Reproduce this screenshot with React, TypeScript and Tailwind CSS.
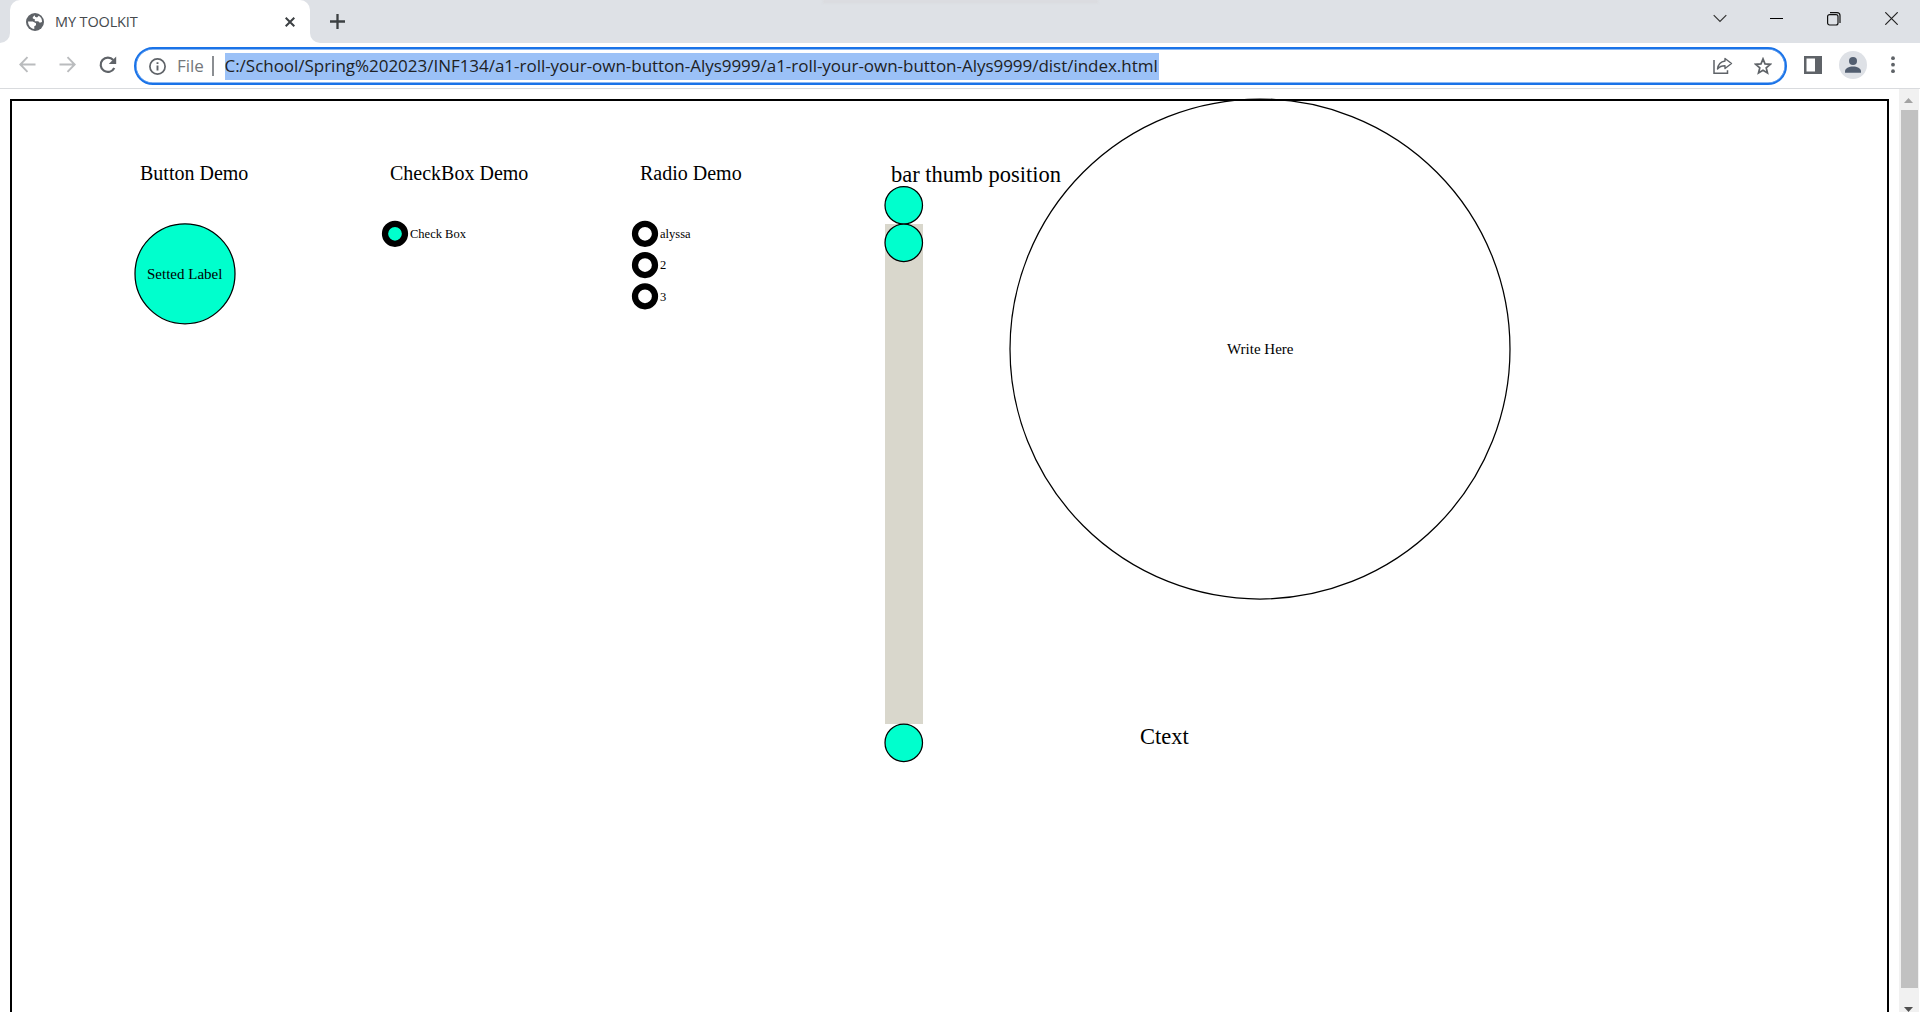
import type { ReactNode } from "react";

const serif = "font-['Liberation_Serif',serif]";

type DiscProps = { at: string; box: number; cx: number; cy: number; r: number; fill: string; stroke?: number };

function Disc({ at, box, cx, cy, r, fill, stroke = 1.25 }: DiscProps) {
  return (
    <svg className={`absolute ${at}`} width={box} height={box}>
      <circle cx={cx} cy={cy} r={r} fill={fill} stroke="#000" strokeWidth={stroke} />
    </svg>
  );
}

function Label({ className, children }: { className: string; children: ReactNode }) {
  return <span className={`absolute whitespace-pre leading-none ${className}`}>{children}</span>;
}

const MINT = "#00ffcd";

function TabStrip() {
  return (
    <div className="relative flex h-[43px] bg-[#dee1e6]">
      <div className="absolute top-0 left-[823px] h-[3px] w-[275px] bg-[#d9dade] blur-[1px]" />
      <div className="flex w-[10px] items-end bg-white">
        <div className="h-full w-full rounded-br-[10px] bg-[#dee1e6]" />
      </div>
      <div className="bg-[#dee1e6]">
        <div className="flex h-full w-[300px] items-center rounded-t-[10px] bg-white pr-[15px] pl-[16px]">
          <svg width="18" height="18" viewBox="0 0 18 18">
            <circle cx="9" cy="9" r="9" fill="#5f6368" />
            <path d="M9 2.200 6.800 4v1.500l2 .8v1.900h3.400l1.600 1.500 2.200-.7c.2-2.800-1-5-3.200-6.300L11 4.600 9 3.800z" fill="#fff" />
            <path d="M2 8.500h4.800l3.200 1.700v2.100l-1.700.9v2.700C4.800 15.500 2.200 12.800 2 8.500z" fill="#fff" />
          </svg>
          <span className="ml-[11px] flex-1 font-['Open_Sans',sans-serif] text-[14.500px] tracking-[-0.130px] text-[#45494d]">MY TOOLKIT</span>
          <svg width="10" height="10" viewBox="0 0 10 10" className="mt-px">
            <path d="M.7.7 9.300 9.300M9.300.7.7 9.300" stroke="#3c4043" strokeWidth="2" />
          </svg>
        </div>
      </div>
      <div className="w-[10px] bg-white">
        <div className="h-full w-full rounded-bl-[10px] bg-[#dee1e6]" />
      </div>
      <svg className="mt-[14px] ml-[10px]" width="15" height="15" viewBox="0 0 15 15">
        <path d="M7.500 0v15M0 7.500h15" stroke="#3c4043" strokeWidth="2.300" />
      </svg>
      <div className="ml-auto flex h-[37px] items-center pr-[22px]">
        <svg width="14" height="9" viewBox="0 0 14 9" className="mr-[43px]">
          <path d="M.7 1.200 7 7.500l6.300-6.300" fill="none" stroke="#333" strokeWidth="1.200" />
        </svg>
        <div className="mr-[44px] h-px w-[13px] bg-black" />
        <svg width="14" height="14" viewBox="0 0 14 14" className="mr-[44px]">
          <rect x=".6" y="2.600" width="10.400" height="10.400" rx="2" fill="none" stroke="#111" strokeWidth="1.200" />
          <path d="M3 .6h7c2 0 3 1 3 3V11" fill="none" stroke="#111" strokeWidth="1.200" />
        </svg>
        <svg width="13" height="13" viewBox="0 0 13 13">
          <path d="m.3.3 12.400 12.400m0-12.400L.3 12.700" stroke="#222" strokeWidth="1.200" />
        </svg>
      </div>
    </div>
  );
}

function Toolbar() {
  return (
    <div className="flex h-[46px] border-b border-[#d9dbde] bg-white pt-[4px] pl-[19px]">
      <svg width="17" height="17" viewBox="0 0 17 17" className="mt-[9px] mr-[23px]">
        <path d="M16.500 8.500H1.500M8.500 1.200 1.300 8.500l7.200 7.300" fill="none" stroke="#babcbe" strokeWidth="1.900" />
      </svg>
      <svg width="17" height="17" viewBox="0 0 17 17" className="mt-[9px] mr-[23px]">
        <path d="M.5 8.500h15M8.500 1.200l7.200 7.300-7.200 7.300" fill="none" stroke="#babcbe" strokeWidth="1.900" />
      </svg>
      <svg width="18" height="18" viewBox="0 0 18 18" className="mt-[9px] mr-[17px]">
        <path d="M15.300 12A7.200 7.200 0 1 1 14.300 4" fill="none" stroke="#5f6368" strokeWidth="2.200" />
        <path d="M17.200.5v7.500H9.800z" fill="#5f6368" />
      </svg>
      <div className="flex h-[38px] w-[1653px] items-center rounded-full border-[2px] border-[#1a73e8] pr-[13px] pl-[13px] shadow-[inset_0_0_0_0.500px_#1a73e8]">
        <svg width="17" height="17" viewBox="0 0 17 17">
          <circle cx="8.500" cy="8.500" r="7.600" fill="none" stroke="#5f6368" strokeWidth="1.700" />
          <path d="M8.500 7.400v5.200M8.500 4.200v1.900" stroke="#5f6368" strokeWidth="1.900" />
        </svg>
        <span className="ml-[11px] w-[35px] font-['Open_Sans',sans-serif] text-[17px] text-[#73777b]">File</span>
        <div className="mr-[11px] h-[20px] w-[1.500px] bg-[#8b8e92]" />
        <div className="flex h-[27px] w-[934px] items-center bg-[#9bc1f7]">
          <span className="font-['Open_Sans',sans-serif] text-[17px] tracking-[-0.025px] whitespace-nowrap text-[#202124]">
            C:/School/Spring%202023/INF134/a1-roll-your-own-button-Alys9999/a1-roll-your-own-button-Alys9999/dist/index.html
          </span>
        </div>
        <svg width="20" height="18" viewBox="0 0 20 18" className="mr-[21px] ml-auto">
          <path d="M1 3v13.300h13.500v-3" fill="none" stroke="#5f6368" strokeWidth="1.500" />
          <path d="M12 1.500 18.500 6.500 12 11.500V8.800c-3.500 0-5.700 1-7.500 3.200.6-4.500 3.200-7.300 7.500-8z" fill="none" stroke="#5f6368" strokeWidth="1.400" strokeLinejoin="round" />
        </svg>
        <svg width="18" height="18" viewBox="0 0 18 18">
          <path d="m9 1.900 2 5 5.300.4-4.100 3.500 1.300 5.200L9 13.200 4.500 16l1.300-5.200-4.100-3.500 5.300-.4z" fill="none" stroke="#5f6368" strokeWidth="1.700" />
        </svg>
      </div>
      <svg width="18" height="18" viewBox="0 0 18 18" className="mt-[9px] ml-[17px]">
        <path d="M0 0h18v18H0zM2.500 2.500v13H11v-13z" fill="#5f6368" fillRule="evenodd" />
      </svg>
      <svg width="28" height="28" viewBox="0 0 28 28" className="mt-[4px] ml-[17px]">
        <circle cx="14" cy="14" r="14" fill="#dee1e6" />
        <circle cx="14" cy="10" r="4" fill="#525e70" />
        <path d="M6 21.800v-1.500c0-3 4-4.800 8-4.800s8 1.800 8 4.800v1.500z" fill="#525e70" />
      </svg>
      <svg width="4" height="18" viewBox="0 0 4 18" className="mt-[9px] ml-[24px]">
        <circle cx="2" cy="2.200" r="1.900" fill="#5f6368" />
        <circle cx="2" cy="8.700" r="1.900" fill="#5f6368" />
        <circle cx="2" cy="15.200" r="1.900" fill="#5f6368" />
      </svg>
    </div>
  );
}

function Scrollbar() {
  return (
    <div className="mr-[1px] ml-[10px] flex w-[20px] flex-col items-center bg-[#f1f1f1]">
      <svg width="9" height="5" viewBox="0 0 9 5" className="mt-[9px] mr-px">
        <path d="M4.500 0 9 5H0z" fill="#a3a3a3" />
      </svg>
      <div className="mt-[7px] h-[878px] w-[17px] bg-[#c1c1c1]" />
      <svg width="9" height="5" viewBox="0 0 9 5" className="mt-[19px] mr-px">
        <path d="M0 0h9L4.500 5z" fill="#505050" />
      </svg>
    </div>
  );
}

function ToolkitCanvas() {
  return (
    <main className={`relative mt-[10px] ml-[10px] h-[913px] w-[1879px] text-black ${serif}`}>
      <div className="h-full border-2 border-b-0 border-black" />

      <Label className="top-[64px] left-[130px] text-[20px]">Button Demo</Label>
      <Disc at="top-[123px] left-[123px]" box={104} cx={52} cy={51.75} r={50} fill={MINT} />
      <Label className="top-[168px] left-[137px] text-[15px]">Setted Label</Label>

      <Label className="top-[64px] left-[380px] text-[20px]">CheckBox Demo</Label>
      <Disc at="top-[120px] left-[370px]" box={30} cx={15} cy={14.75} r={10} fill={MINT} stroke={6.25} />
      <Label className="top-[129px] left-[400px] text-[12.500px]">Check Box</Label>

      <Label className="top-[64px] left-[630px] text-[20px]">Radio Demo</Label>
      <Disc at="top-[120px] left-[620px]" box={30} cx={15} cy={14.75} r={10} fill="#fff" stroke={6.25} />
      <Label className="top-[129px] left-[650px] text-[12.500px]">alyssa</Label>
      <Disc at="top-[151px] left-[620px]" box={30} cx={15} cy={15} r={10} fill="#fff" stroke={6.25} />
      <Label className="top-[160px] left-[650px] text-[12.500px]">2</Label>
      <Disc at="top-[182px] left-[620px]" box={30} cx={15} cy={15.25} r={10} fill="#fff" stroke={6.25} />
      <Label className="top-[192px] left-[650px] text-[12.500px]">3</Label>

      <Label className="top-[65px] left-[881px] text-[22.500px]">bar thumb position</Label>
      <div className="absolute top-[125px] left-[875px] h-[500px] w-[37.500px] bg-[#d9d7cc]" />
      <Disc at="top-[86px] left-[873px]" box={42} cx={20.75} cy={20.25} r={18.75} fill={MINT} />
      <Disc at="top-[123px] left-[873px]" box={42} cx={20.75} cy={20.75} r={18.75} fill={MINT} />
      <Disc at="top-[623px] left-[873px]" box={42} cx={20.75} cy={20.75} r={18.75} fill={MINT} />

      <Disc at="top-[-1px] left-[998px]" box={504} cx={252} cy={251} r={250} fill="none" />
      <Label className="top-[243px] left-[1217px] text-[15px]">Write Here</Label>
      <Label className="top-[627px] left-[1130px] text-[22.500px]">Ctext</Label>
    </main>
  );
}

export default function App() {
  return (
    <div className="h-[1012px] w-[1920px] overflow-hidden bg-white">
      <TabStrip />
      <Toolbar />
      <div className="flex h-[923px]">
        <ToolkitCanvas />
        <Scrollbar />
      </div>
    </div>
  );
}
